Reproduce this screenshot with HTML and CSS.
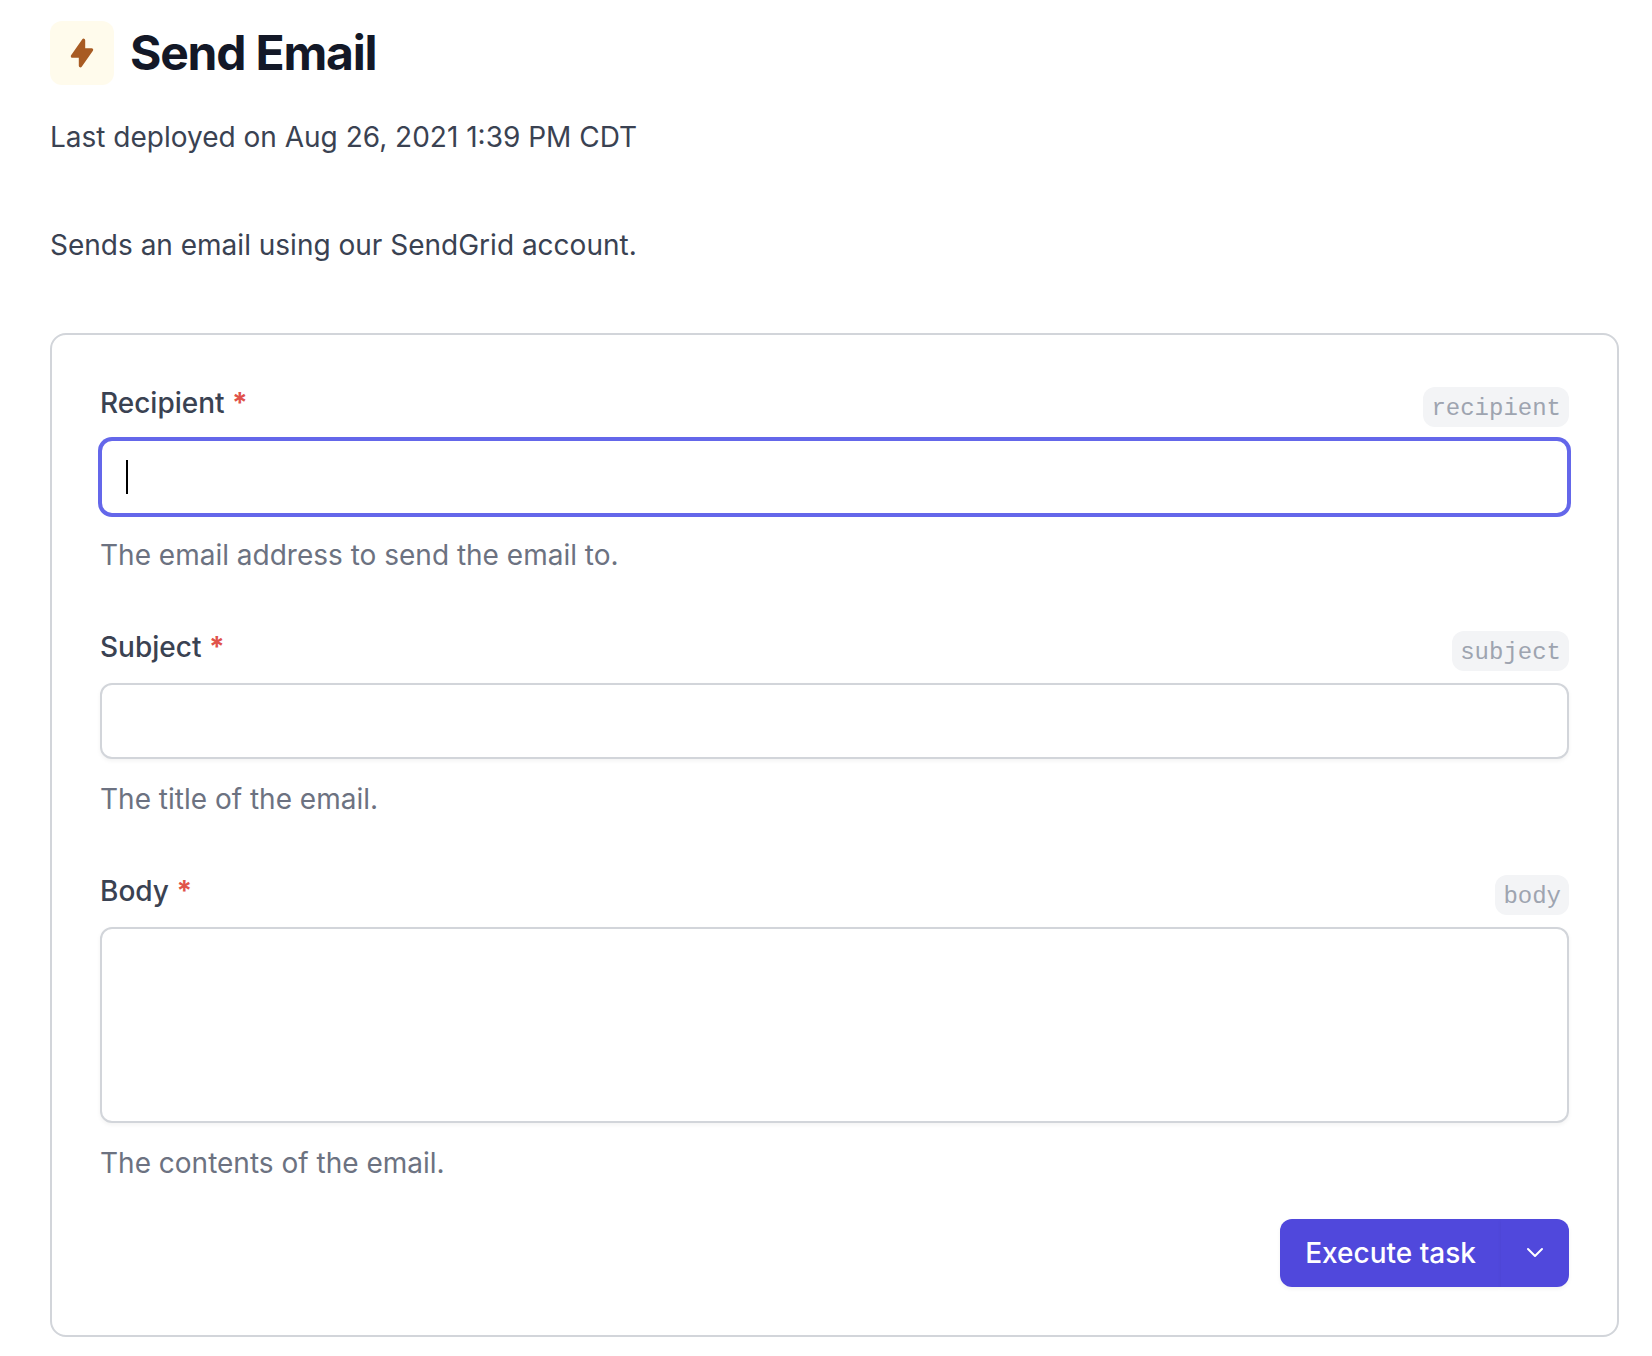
FILE: index.html
```html
<!DOCTYPE html>
<html lang="en">
<head>
    <meta charset="UTF-8">
    <meta name="viewport" content="width=device-width, initial-scale=1.0">
    <title>Send Email</title>
    <link rel="stylesheet" href="styles.css">
</head>
<body>

<header class="task-header">
    <div class="task-icon">
        <svg viewBox="0 0 20 20" width="32" height="32" fill="currentColor" aria-hidden="true">
            <path fill-rule="evenodd" clip-rule="evenodd" d="M11.3 1.046A1 1 0 0112 2v5h4a1 1 0 01.82 1.573l-7 10A1 1 0 018 18v-5H4a1 1 0 01-.82-1.573l7-10a1 1 0 011.12-.38z"/>
        </svg>
    </div>
    <h1>Send Email</h1>
</header>

<p class="deployed">Last deployed on Aug 26, 2021 1:39 PM CDT</p>
<p class="description">Sends an email using our SendGrid account.</p>

<form class="card">
    <div class="field">
        <div class="field-head">
            <label for="recipient">Recipient <span class="required">*</span></label>
            <code>recipient</code>
        </div>
        <div class="control">
            <input type="text" id="recipient" class="active">
            <span class="caret"></span>
        </div>
        <p class="help">The email address to send the email to.</p>
    </div>

    <div class="field">
        <div class="field-head">
            <label for="subject">Subject <span class="required">*</span></label>
            <code>subject</code>
        </div>
        <div class="control">
            <input type="text" id="subject">
        </div>
        <p class="help">The title of the email.</p>
    </div>

    <div class="field">
        <div class="field-head">
            <label for="body">Body <span class="required">*</span></label>
            <code>body</code>
        </div>
        <div class="control">
            <textarea id="body"></textarea>
        </div>
        <p class="help">The contents of the email.</p>
    </div>

    <div class="actions">
        <button type="button" class="execute">Execute task</button>
        <button type="button" class="more" aria-label="More options">
            <svg viewBox="0 0 20 12" width="20" height="12" fill="none" stroke="currentColor" stroke-width="2" stroke-linecap="round" stroke-linejoin="round" aria-hidden="true">
                <path d="M3 2l7 7 7-7"/>
            </svg>
        </button>
    </div>
</form>

</body>
</html>
```
FILE: styles.css
```css
* {
    box-sizing: border-box;
}
body {
    margin: 0;
    padding: 21px 33px 19px 50px;
    font-family: Inter, "Liberation Sans", sans-serif;
    font-size: 28px;
    line-height: 40px;
    color: #3a4252;
    background-color: #fff;
}
h1, p {
    margin: 0;
}
h1 {
    font-size: 48px;
    line-height: 64px;
    font-weight: 700;
    letter-spacing: -0.025em;
    color: #131827;
}
.task-header {
    display: flex;
    align-items: center;
    gap: 16px;
    margin-bottom: 32px;
}
.task-icon {
    display: flex;
    align-items: center;
    justify-content: center;
    width: 64px;
    height: 64px;
    border-radius: 12px;
    color: #a85b23;
    background-color: #fffbec;
}
.deployed, .description {
    margin-bottom: 68px;
}
.card {
    padding: 48px;
    border: 2px solid #d2d5da;
    border-radius: 16px;
}
.field {
    margin-bottom: 52px;
}
.field:nth-child(3) {
    margin-bottom: 36px;
}
.field-head {
    display: flex;
    justify-content: space-between;
    height: 44px;
    margin-bottom: 12px;
}
label {
    font-weight: 500;
}
.required {
    font-weight: 700;
    color: #e0524a;
}
code {
    align-self: flex-end;
    padding: 4px 8px 0;
    border-radius: 12px;
    font-family: "Liberation Mono", monospace;
    font-size: 24px;
    line-height: 36px;
    color: #9ea4b0;
    background-color: #f3f4f6;
}
.control {
    position: relative;
    margin-bottom: 20px;
}
input, textarea {
    display: block;
    width: 100%;
    height: 76px;
    padding: 16px 24px;
    border: 2px solid #d2d5da;
    border-radius: 12px;
    outline: none;
    font: inherit;
    color: #131827;
    background-color: #fff;
    box-shadow: 0 2px 4px rgba(0,0,0,0.05);
    resize: none;
}
textarea {
    height: 196px;
}
input:focus, textarea:focus, .active {
    border-color: #6467ea;
    box-shadow: 0 0 0 2px #6467ea;
}
/* text cursor in the active field */
.caret {
    position: absolute;
    left: 26px;
    top: 21px;
    width: 2px;
    height: 34px;
    background-color: #000;
}
.help {
    color: #6c7281;
}
.actions {
    display: flex;
    justify-content: flex-end;
}
button {
    height: 68px;
    border: none;
    font: inherit;
    font-weight: 500;
    color: #fff;
    background-color: #5048dc;
    box-shadow: 0 2px 4px rgba(0,0,0,0.05);
    cursor: pointer;
}
.execute {
    padding: 0 25px;
    border-radius: 12px 0 0 12px;
}
.more {
    display: flex;
    align-items: center;
    justify-content: center;
    width: 68px;
    padding: 0;
    border-radius: 0 12px 12px 0;
}
```
